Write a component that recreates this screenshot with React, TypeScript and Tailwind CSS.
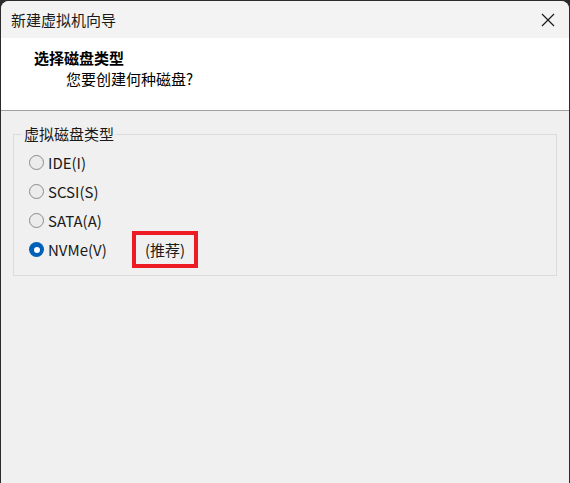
import React from "react";

const font = { fontFamily: '"Noto Sans CJK SC", "Noto Sans", sans-serif' };

function Radio({ label, checked, w }: { label: string; checked?: boolean; w?: string }) {
  return (
    <div className={"flex items-center h-[29px] " + (w ?? "")}>
      {checked ? (
        <span className="w-[15px] h-[15px] rounded-full bg-[#005fb8] flex items-center justify-center shrink-0">
          <span className="w-[6px] h-[6px] rounded-full bg-white" />
        </span>
      ) : (
        <span className="w-[15px] h-[15px] rounded-full border border-[#8a8a8a] bg-[#ececec] shrink-0" />
      )}
      <span className="ml-[4px] text-[15px] leading-[20px] text-[#1a1a1a]">{label}</span>
    </div>
  );
}

export default function App() {
  return (
    <div className="w-[570px] h-[483px] bg-[#2b2b2b] px-[1px] pt-[1px] overflow-hidden" style={font}>
      <div className="h-full bg-[#f0f0f0] rounded-t-[8px] overflow-hidden flex flex-col">
        <div className="h-[37px] bg-[#f3f3f3] flex items-center justify-between pl-[10px] pr-[14px] shrink-0">
          <span className="text-[15px] leading-[20px] text-[#1a1a1a]">新建虚拟机向导</span>
          <svg width="14" height="14" viewBox="0 0 14 14">
            <path d="M1 1 L13 13 M13 1 L1 13" stroke="#1a1a1a" strokeWidth="1.2" />
          </svg>
        </div>
        <div className="h-[73px] bg-white border-b border-[#a0a0a0] shrink-0 pl-[33px] pt-[10px]">
          <div className="text-[15px] leading-[20px] font-bold text-black">选择磁盘类型</div>
          <div className="text-[15px] leading-[20px] text-black pl-[32px] mt-[1px]">您要创建何种磁盘?</div>
        </div>
        <div className="px-[12px] pt-[23px]">
          <div className="relative border border-[#dcdcdc] h-[142px] pl-[15px] pt-[13px]">
            <span className="absolute left-[8px] top-[-11px] px-[2px] bg-[#f0f0f0] text-[15px] leading-[20px] text-[#1a1a1a]">
              虚拟磁盘类型
            </span>
            <Radio label="IDE(I)" />
            <Radio label="SCSI(S)" />
            <Radio label="SATA(A)" />
            <div className="flex items-center h-[29px]">
              <Radio label="NVMe(V)" checked w="w-[103px]" />
              <div className="w-[66px] h-[37px] shrink-0 border-[4px] border-[#ed1c24] flex items-center justify-center text-[15px] leading-[20px] text-[#1a1a1a]">
                (推荐)
              </div>
            </div>
          </div>
        </div>
      </div>
    </div>
  );
}
